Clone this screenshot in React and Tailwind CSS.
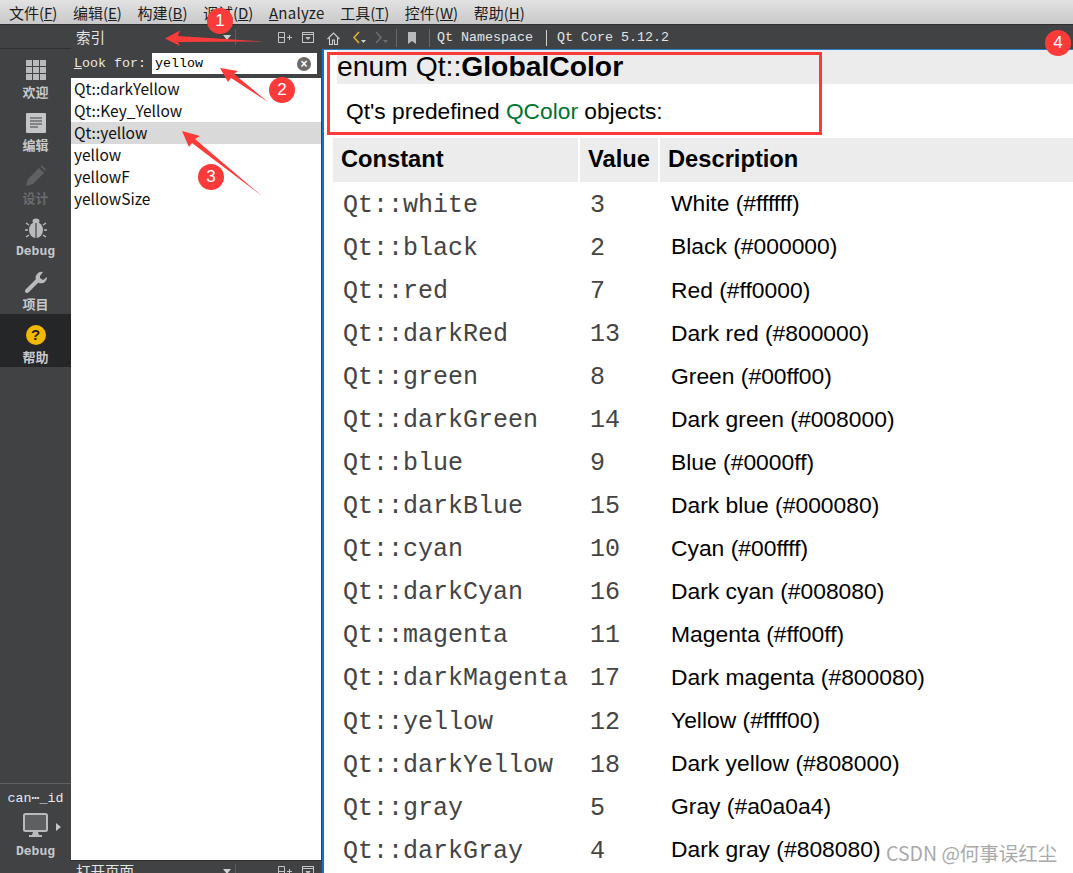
import React from "react";

const sans = "font-['Liberation_Sans',Arial,sans-serif]";
const mono = "font-['Liberation_Mono','Courier_New',monospace]";
const ui = "font-['Noto_Sans_CJK_SC','Noto_Sans',sans-serif]";

const menus = [
  ["文件(", "F", ")"],
  ["编辑(", "E", ")"],
  ["构建(", "B", ")"],
  ["调试(", "D", ")"],
  ["", "A", "nalyze"],
  ["工具(", "T", ")"],
  ["控件(", "W", ")"],
  ["帮助(", "H", ")"],
];

const results = ["Qt::darkYellow", "Qt::Key_Yellow", "Qt::yellow", "yellow", "yellowF", "yellowSize"];

const colors = [
  ["Qt::white", "3", "White (#ffffff)"],
  ["Qt::black", "2", "Black (#000000)"],
  ["Qt::red", "7", "Red (#ff0000)"],
  ["Qt::darkRed", "13", "Dark red (#800000)"],
  ["Qt::green", "8", "Green (#00ff00)"],
  ["Qt::darkGreen", "14", "Dark green (#008000)"],
  ["Qt::blue", "9", "Blue (#0000ff)"],
  ["Qt::darkBlue", "15", "Dark blue (#000080)"],
  ["Qt::cyan", "10", "Cyan (#00ffff)"],
  ["Qt::darkCyan", "16", "Dark cyan (#008080)"],
  ["Qt::magenta", "11", "Magenta (#ff00ff)"],
  ["Qt::darkMagenta", "17", "Dark magenta (#800080)"],
  ["Qt::yellow", "12", "Yellow (#ffff00)"],
  ["Qt::darkYellow", "18", "Dark yellow (#808000)"],
  ["Qt::gray", "5", "Gray (#a0a0a4)"],
  ["Qt::darkGray", "4", "Dark gray (#808080)"],
];

function GridIcon() {
  return (
    <svg width="20" height="20" viewBox="0 0 20 20" fill="#b9babb">
      {[0, 7, 14].flatMap((y) => [0, 7, 14].map((x) => <rect key={`${x}-${y}`} x={x} y={y} width="6" height="6" />))}
    </svg>
  );
}

function DocIcon() {
  return (
    <svg width="20" height="20" viewBox="0 0 20 20">
      <rect width="20" height="20" rx="1" fill="#c4c5c6" />
      <path d="M4 5h12M4 8h12M4 11h12M4 14h8" stroke="#404244" strokeWidth="1.2" />
    </svg>
  );
}

function PencilIcon() {
  return (
    <svg width="22" height="22" viewBox="0 0 22 22" fill="#5f6062">
      <path d="M1 21l2-7L14 3l5 5L8 19z" />
      <path d="M15.5 1.5l1.5-1 4 4-1 1.5z" />
    </svg>
  );
}

function BugIcon() {
  return (
    <svg width="22" height="22" viewBox="0 0 22 22">
      <ellipse cx="11" cy="4" rx="3.5" ry="2.5" fill="#b9babb" />
      <ellipse cx="11" cy="13" rx="7" ry="8" fill="#b9babb" />
      <path d="M11 6v15" stroke="#404244" strokeWidth="1.2" />
      <path d="M4 8L1 6M3 13H0M4 18l-3 2M18 8l3-2M19 13h3M18 18l3 2" stroke="#b9babb" strokeWidth="1.5" />
    </svg>
  );
}

function WrenchIcon() {
  return (
    <svg width="22" height="22" viewBox="0 0 22 22">
      <path d="M2 20L12 10" stroke="#b9babb" strokeWidth="4" strokeLinecap="round" />
      <path d="M18 1a6 6 0 0 0-7 8l3 3a6 6 0 0 0 8-6l-4 3-3-2V5z" fill="#b9babb" />
    </svg>
  );
}

function HelpIcon() {
  return (
    <div className={`flex h-5 w-5 items-center justify-center rounded-full bg-[#f2b900] text-[15px] leading-none font-bold text-[#222] ${sans}`}>?</div>
  );
}

function MonitorIcon() {
  return (
    <svg width="26" height="25" viewBox="0 0 26 25">
      <rect x="1" y="1" width="23" height="17" rx="1.5" fill="#5e5f61" stroke="#b9babb" strokeWidth="2" />
      <path d="M10 19h5l1 3h3v2H6v-2h3z" fill="#b9babb" />
    </svg>
  );
}

function ModeButton({ icon, label, dim, active, latin }) {
  return (
    <div className={`flex h-[53px] flex-col items-center justify-center pt-[5px] ${active ? "bg-[#252628]" : ""}`}>
      <div className="flex h-[26px] items-center">{icon}</div>
      <div className={`text-[13px] leading-[17px] font-bold ${dim ? "text-[#6a6b6d]" : "text-[#c8c9ca]"} ${latin ? `mt-[2px] ${mono}` : ui}`}>{label}</div>
    </div>
  );
}

function SplitIcons() {
  return (
    <div className="flex items-center gap-[9px]">
      <svg width="15" height="13" viewBox="0 0 15 13" fill="none" stroke="#c4c5c6">
        <path d="M.5 1.5h6v10h-6zM.5 6.5h6M11.5 4v5M9 6.5h5" />
      </svg>
      <svg width="12" height="11" viewBox="0 0 12 11" fill="none" stroke="#c4c5c6">
        <rect x=".5" y=".5" width="11" height="10" />
        <path d="M.5 2.5h11" />
        <path d="M4 5.5h4L6 7.5z" fill="#c4c5c6" />
      </svg>
    </div>
  );
}

function PanelHeader({ title, height }) {
  return (
    <div className={`flex shrink-0 items-center bg-[#404244] pr-[7px] pl-[5px] ${height}`}>
      <span className={`text-[14.5px] leading-none whitespace-nowrap text-[#e4e4e4] ${ui}`}>{title}</span>
      <div className="ml-auto flex items-center">
        <svg width="8" height="5" viewBox="0 0 8 5" fill="#d0d0d0"><path d="M0 0h8L4 5z" /></svg>
        <div className="mr-[42px] ml-[4px] h-[16px] w-px bg-[#5c5d5f]" />
      </div>
      <SplitIcons />
    </div>
  );
}

function Badge({ n, className }) {
  return (
    <div className={`absolute flex h-[26px] w-[26px] items-center justify-center rounded-full bg-[#fb3a3a] text-[17px] text-white ${sans} ${className}`}>{n}</div>
  );
}

export default function App() {
  return (
    <div className="relative flex h-[873px] w-[1073px] flex-col overflow-hidden bg-white">
      {/* menu bar */}
      <div className={`flex h-[24px] shrink-0 items-center bg-gradient-to-b from-[#e2e2e2] to-[#c9c9c9] text-[15px] leading-none text-[#1c1c1c] ${ui}`}>
        <div className="flex pl-[9px]">
          {menus.map(([a, k, b]) => (
            <span key={k} className={`mr-[15.5px] whitespace-nowrap ${k === "A" ? "tracking-[0.3px]" : ""}`}>
              {a}<span className="underline">{k}</span>{b}
            </span>
          ))}
        </div>
      </div>
      <div className="h-px shrink-0 bg-[#2e2e2e]" />

      <div className="flex min-h-0 flex-1">
        {/* mode selector */}
        <div className="flex w-[71px] shrink-0 flex-col bg-[#404244]">
          <div className="h-[24px] shrink-0 border-b border-[#2f3032]" />
          <ModeButton icon={<GridIcon />} label="欢迎" />
          <ModeButton icon={<DocIcon />} label="编辑" />
          <ModeButton icon={<PencilIcon />} label="设计" dim />
          <ModeButton icon={<BugIcon />} label="Debug" latin />
          <ModeButton icon={<WrenchIcon />} label="项目" />
          <ModeButton icon={<HelpIcon />} label="帮助" active />
          <div className="flex-1" />
          <div className="h-px shrink-0 bg-[#5f6062]" />
          <div className="flex h-[89px] shrink-0 flex-col items-center pt-[6px]">
            <div className={`text-[13.33px] leading-[17px] whitespace-nowrap text-[#e8e8e8] ${mono}`}>can⋯_id</div>
            <div className="relative mt-[3px] flex h-[31px] w-full items-center justify-center">
              <MonitorIcon />
              <svg className="absolute top-[13px] left-[56px]" width="5" height="8" viewBox="0 0 5 8" fill="#c4c5c6"><path d="M0 0l5 4-5 4z" /></svg>
            </div>
            <div className={`mt-[2px] text-[13px] leading-[17px] font-bold text-[#c8c9ca] ${mono}`}>Debug</div>
          </div>
        </div>

        {/* index side panel */}
        <div className="flex w-[251px] shrink-0 flex-col border-r border-[#404244] bg-[#404244]">
          <PanelHeader title="索引" height="h-[24px]" />
          <div className="flex h-[29px] shrink-0 items-center pr-[4px] pl-[3px]">
            <span className={`mr-[6px] text-[13.33px] whitespace-nowrap text-[#e8e8e8] ${mono}`}>
              <span className="underline">L</span>ook for:
            </span>
            <div className="flex h-[21px] flex-1 items-center bg-white pr-[6px] pl-[3px]">
              <span className={`text-[13.33px] text-black ${mono}`}>yellow</span>
              <div className={`ml-auto flex h-[14px] w-[14px] items-center justify-center rounded-full bg-[#6a6a6a] text-[12px] leading-none font-bold text-white ${sans}`}>×</div>
            </div>
          </div>
          <div className="min-h-0 flex-1 bg-white">
            {results.map((r) => (
              <div key={r} className={`flex h-[22px] items-center pl-[3px] text-[15.5px] text-[#111] ${ui} ${r === "Qt::yellow" ? "bg-[#d9d9d9]" : ""}`}>{r}</div>
            ))}
          </div>
          <div className="h-px shrink-0 bg-[#2e2e2e]" />
          <PanelHeader title="打开页面" height="h-[12px] pt-[9px]" />
        </div>

        {/* documentation viewer */}
        <div className="flex min-w-0 flex-1 flex-col">
          <div className={`flex h-[24px] shrink-0 items-center bg-[#404244] pt-[2px] pl-[5px] text-[13.33px] text-[#e4e4e4] ${mono}`}>
            <svg width="13" height="13" viewBox="0 0 13 13" fill="none" stroke="#d0d0d0" strokeWidth="1.1"><path d="M.5 7l6-6 6 6M2.5 6v6.5h3V8h2v4.5h3V6" /></svg>
            <svg className="ml-[13px]" width="13" height="14" viewBox="0 0 13 14" fill="none" stroke="#e3b32a" strokeWidth="1.6"><path d="M6 1L1 6.5 6 12" /><path d="M8 9h5l-2.5 3z" fill="#d0d0d0" stroke="none" /></svg>
            <svg className="ml-[9px]" width="13" height="14" viewBox="0 0 13 14" fill="none" stroke="#6d6e70" strokeWidth="1.6"><path d="M1 1l5 5.5L1 12" /><path d="M8 9h5l-2.5 3z" fill="#6d6e70" stroke="none" /></svg>
            <div className="mr-[11px] ml-[8px] h-[18px] w-px bg-[#68696b]" />
            <svg width="8" height="12" viewBox="0 0 8 12" fill="#b9babb"><path d="M0 0h8v12L4 9l-4 3z" /></svg>
            <div className="mr-[7px] ml-[13px] h-[18px] w-px bg-[#68696b]" />
            <span className="whitespace-pre">Qt Namespace</span>
            <div className="mr-[10px] ml-[13px] h-[16px] w-px bg-[#d0d0d0]" />
            <span className="whitespace-pre">Qt Core 5.12.2</span>
          </div>
          <div className={`min-h-0 flex-1 border-t border-l-2 border-t-[#2a7fc9] border-l-[#1170c8] bg-white text-black ${sans}`}>
            <div className="ml-[13px] flex h-[34px] items-center bg-[#ececec] pb-[1px] text-[28.3px] leading-none whitespace-nowrap">
              enum Qt::<span className="font-bold">GlobalColor</span>
            </div>
            <div className="mt-[12px] ml-[22px] text-[22.75px] leading-[30px]">
              Qt's predefined <span className="text-[#007330]">QColor</span> objects:
            </div>
            <div className="mt-[12px] ml-[9px] flex h-[44px] gap-[2px] text-[23.7px] font-bold">
              <div className="flex w-[245px] items-center bg-[#ececec] pl-[8px]">Constant</div>
              <div className="flex w-[78px] items-center bg-[#ececec] pl-[8px]">Value</div>
              <div className="flex flex-1 items-center bg-[#ececec] pl-[8px]">Description</div>
            </div>
            <div className="mt-[2px] ml-[9px]">
              {colors.map(([name, value, desc]) => (
                <div key={name} className="flex h-[43.07px] items-center gap-[2px]">
                  <div className={`w-[245px] pl-[10px] text-[25px] text-[#444] ${mono}`}>{name}</div>
                  <div className={`w-[78px] pl-[10px] text-[25px] text-[#444] ${mono}`}>{value}</div>
                  <div className="pb-[4px] pl-[11px] text-[22.85px] whitespace-nowrap">{desc}</div>
                </div>
              ))}
            </div>
          </div>
        </div>
      </div>

      {/* review annotations drawn over the window */}
      <div className="absolute top-[52px] left-[327px] h-[83px] w-[495px] border-[3px] border-[#fb3a3a]" />
      <svg className="absolute top-0 left-0" width="1073" height="873" fill="#fb3a3a">
        <path d="M165 38.5L180 30.5L178 36L265 41.5L178 42L180 46z" />
        <path d="M220 68L238 71L234 74L268 102L231 78L228 82z" />
        <path d="M182 131L200 136L195 139L262 196L192 143L189 147z" />
      </svg>
      <Badge n="1" className="top-[8px] left-[207px]" />
      <Badge n="2" className="top-[77px] left-[269px]" />
      <Badge n="3" className="top-[164px] left-[198px]" />
      <Badge n="4" className="top-[30px] left-[1045px]" />
      <div className={`absolute top-[840px] left-[886px] text-[19.5px] leading-[26px] whitespace-nowrap text-[#a9a9a9] ${ui}`}>CSDN @何事误红尘</div>
    </div>
  );
}
